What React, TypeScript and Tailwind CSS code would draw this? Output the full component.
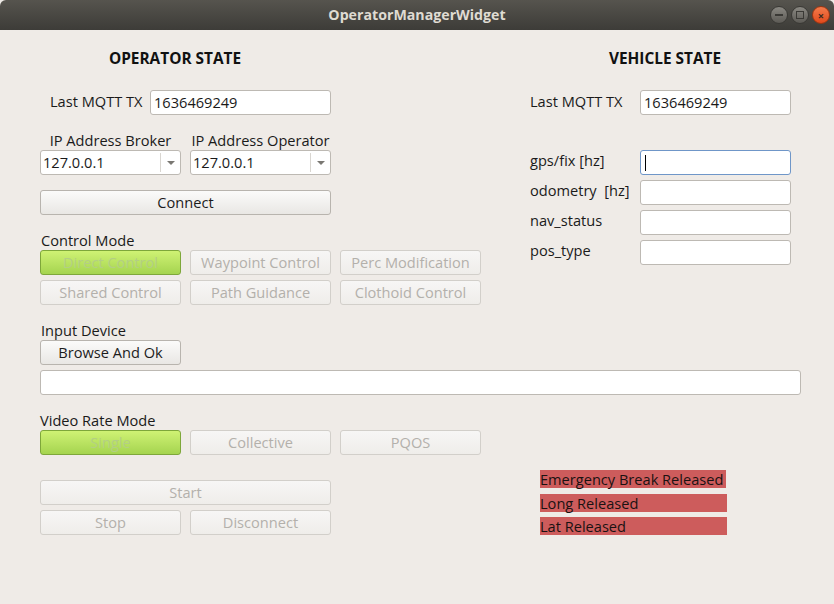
import React from "react";

const font = { fontFamily: '"Open Sans", "Noto Sans", sans-serif' };

function Btn({ children, w, variant = "normal" }: { children: React.ReactNode; w: string; variant?: "normal" | "disabled" | "green" }) {
  const base = "h-[25px] rounded-[3px] border flex items-center justify-center text-[14.6px] leading-none " + w;
  if (variant === "green")
    return <div className={base + " border-[#7ea73a] bg-gradient-to-b from-[#cff274] to-[#a5d44f] text-[#b3cf84]"}>{children}</div>;
  if (variant === "disabled")
    return <div className={base + " border-[#d2cfca] bg-gradient-to-b from-[#f7f6f5] to-[#efedea] text-[#b3b0ab]"}>{children}</div>;
  return <div className={base + " border-[#b8b4ae] bg-gradient-to-b from-[#fbfbfa] to-[#e9e7e4] text-[#1c1c1c]"}>{children}</div>;
}

function Input({ w, value, focus }: { w: string; value?: string; focus?: boolean }) {
  return (
    <div
      className={
        "h-[25px] rounded-[3px] bg-white border flex items-center pl-[3px] text-[14.6px] text-[#1a1a1a] " +
        w +
        (focus ? " border-[#6f96c8]" : " border-[#bdb9b3]")
      }
    >
      {focus ? <div className="w-[1px] h-[16px] bg-black ml-[1px]" /> : <span>{value}</span>}
    </div>
  );
}

function Combo({ value }: { value: string }) {
  return (
    <div className="h-[25px] w-[141px] rounded-[3px] bg-white border border-[#bdb9b3] flex items-center text-[14.6px] text-[#1a1a1a]">
      <span className="flex-1 pl-[2px]">{value}</span>
      <div className="w-[20px] h-[19px] border-l border-[#d9d6d1] flex items-center justify-center">
        <div className="w-0 h-0 border-l-[4px] border-r-[4px] border-t-[4px] border-l-transparent border-r-transparent border-t-[#7a7873]" />
      </div>
    </div>
  );
}

function Label({ children, cls = "" }: { children: React.ReactNode; cls?: string }) {
  return <div className={"text-[14.6px] text-[#1a1a1a] leading-[20px] h-[20px] whitespace-nowrap " + cls}>{children}</div>;
}

export default function App() {
  return (
    <div className="w-[834px] h-[604px] bg-[#efebe7] flex flex-col overflow-hidden" style={font}>
      {/* Title bar */}
      <div className="h-[30px] shrink-0 bg-gradient-to-b from-[#56544e] to-[#3d3c38] rounded-t-[6px] flex items-center relative">
        <div className="flex-1 text-center text-[14.2px] font-bold text-[#dfdbd2]">OperatorManagerWidget</div>
        <div className="absolute right-[4px] top-[6px] flex gap-[3px]">
          <div className="w-[18px] h-[18px] rounded-full bg-gradient-to-b from-[#8a8882] to-[#5c5a55] border border-[#3a3935] flex items-center justify-center">
            <div className="w-[8px] h-[2px] bg-[#3a3935]" />
          </div>
          <div className="w-[18px] h-[18px] rounded-full bg-gradient-to-b from-[#8a8882] to-[#5c5a55] border border-[#3a3935] flex items-center justify-center">
            <div className="w-[8px] h-[8px] border-[1.5px] border-[#3a3935]" />
          </div>
          <div className="w-[18px] h-[18px] rounded-full bg-gradient-to-b from-[#f37a4a] to-[#e0491a] border border-[#9c3612] flex items-center justify-center text-[#3a2a20] text-[11px] font-bold leading-none">
            ×
          </div>
        </div>
      </div>

      {/* Body */}
      <div className="flex-1 pl-[40px] pt-[19px] flex flex-col">
        <div className="flex">
          {/* Left column */}
          <div className="w-[441px] flex flex-col">
            <div className="w-[270px] text-center text-[15.4px] font-bold leading-[20px] text-[#111]">OPERATOR STATE</div>
            <div className="flex items-center mt-[21px]">
              <div className="w-[110px] pl-[10px] text-[14.6px] text-[#1a1a1a] whitespace-nowrap -mt-[2px]">Last MQTT TX</div>
              <Input w="w-[181px]" value="1636469249" />
            </div>
            <div className="flex gap-[9px] mt-[15px]">
              <Label cls="w-[141px] text-center">IP Address Broker</Label>
              <Label cls="w-[141px] text-center">IP Address Operator</Label>
            </div>
            <div className="flex gap-[9px]">
              <Combo value="127.0.0.1" />
              <Combo value="127.0.0.1" />
            </div>
            <div className="mt-[15px]">
              <Btn w="w-[291px]">Connect</Btn>
            </div>
            <Label cls="mt-[15px] pl-[1px]">Control Mode</Label>
            <div className="flex gap-[9px]">
              <Btn w="w-[141px]" variant="green">Direct Control</Btn>
              <Btn w="w-[141px]" variant="disabled">Waypoint Control</Btn>
              <Btn w="w-[141px]" variant="disabled">Perc Modification</Btn>
            </div>
            <div className="flex gap-[9px] mt-[5px]">
              <Btn w="w-[141px]" variant="disabled">Shared Control</Btn>
              <Btn w="w-[141px]" variant="disabled">Path Guidance</Btn>
              <Btn w="w-[141px]" variant="disabled">Clothoid Control</Btn>
            </div>
            <Label cls="mt-[15px] pl-[1px]">Input Device</Label>
            <Btn w="w-[141px]">Browse And Ok</Btn>
          </div>

          {/* Right column */}
          <div className="ml-[49px] w-[270px] flex flex-col">
            <div className="w-[270px] text-center text-[15.4px] font-bold leading-[20px] text-[#111]">VEHICLE STATE</div>
            <div className="flex items-center mt-[21px]">
              <div className="w-[110px] text-[14.6px] text-[#1a1a1a] whitespace-nowrap -mt-[2px]">Last MQTT TX</div>
              <Input w="w-[151px]" value="1636469249" />
            </div>
            <div className="flex flex-col gap-[5px] mt-[35px]">
              {[
                ["gps/fix [hz]", true],
                ["odometry  [hz]", false],
                ["nav_status", false],
                ["pos_type", false],
              ].map(([l, f]) => (
                <div key={l as string} className="flex items-center">
                  <div className="w-[110px] text-[14.6px] text-[#1a1a1a] whitespace-pre -mt-[3px]">{l as string}</div>
                  <Input w="w-[151px]" focus={f as boolean} />
                </div>
              ))}
            </div>
          </div>
        </div>

        <div className="mt-[5px]">
          <Input w="w-[761px]" />
        </div>

        <Label cls="mt-[15px]">Video Rate Mode</Label>
        <div className="flex gap-[9px]">
          <Btn w="w-[141px]" variant="green">Single</Btn>
          <Btn w="w-[141px]" variant="disabled">Collective</Btn>
          <Btn w="w-[141px]" variant="disabled">PQOS</Btn>
        </div>

        <div className="flex items-start mt-[15px]">
          <div className="w-[291px] pt-[10px] flex flex-col gap-[5px]">
            <Btn w="w-[291px]" variant="disabled">Start</Btn>
            <div className="flex gap-[9px]">
              <Btn w="w-[141px]" variant="disabled">Stop</Btn>
              <Btn w="w-[141px]" variant="disabled">Disconnect</Btn>
            </div>
          </div>
          <div className="ml-[209px] flex flex-col">
            <div className="w-[186px] h-[18px] bg-[#cd5c5c] text-[14.6px] leading-[18px] text-[#1a1212] whitespace-nowrap">Emergency Break Released</div>
            <div className="w-[187px] h-[18px] mt-[6px] bg-[#cd5c5c] text-[14.6px] leading-[18px] text-[#1a1212]">Long Released</div>
            <div className="w-[187px] h-[18px] mt-[5px] bg-[#cd5c5c] text-[14.6px] leading-[18px] text-[#1a1212]">Lat Released</div>
          </div>
        </div>
      </div>
    </div>
  );
}
